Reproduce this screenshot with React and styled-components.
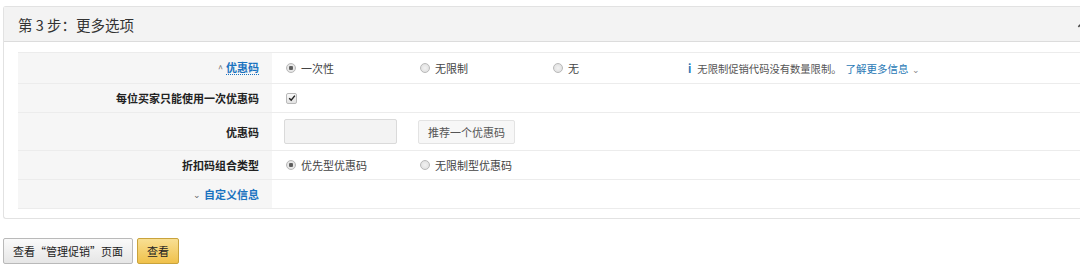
import styled, { createGlobalStyle } from "styled-components";

const GlobalStyle = createGlobalStyle`
    html, body{
        margin: 0;
        padding: 0;
        background: #fff;
        overflow: hidden;
    }
    *{
        box-sizing: border-box;
    }
    body{
        width: 1080px;
        height: 270px;
        font-family: "Noto Sans CJK SC", "Noto Sans", Arial, sans-serif;
        font-size: 11px;
        color: #333;
    }
`

const Page = styled.div`
    padding: 6px 0 0 3px;
    width: 1100px;
`

const Panel = styled.div`
    border: 1px solid #e2e2e2;
    border-right: none;
    border-radius: 3px 0 0 3px;
    background: #fff;
`

const PanelHead = styled.div`
    height: 35px;
    display: flex;
    align-items: center;
    justify-content: space-between;
    padding: 0 12px 0 14px;
    background: #f3f3f3;
    border-bottom: 1px solid #dcdcdc;
    font-size: 14.5px;
    color: #333;
    svg{
        width: 11px;
        height: 11px;
    }
`

const PanelBody = styled.div`
    padding: 10px 0 9px 14px;
`

const Table = styled.div`
    border-top: 1px solid #ececec;
    border-bottom: 1px solid #ececec;
`

const Row = styled.div`
    display: flex;
    height: ${p => p.h || 29}px;
    border-top: ${p => p.first ? "none" : "1px solid #ececec"};
`

const Label = styled.div`
    width: 254px;
    flex: none;
    background: #f6f6f6;
    display: flex;
    align-items: center;
    justify-content: flex-end;
    padding-right: 13px;
    font-weight: bold;
    color: ${p => p.link ? "#1a73c0" : "#222"};
    a{
        color: #1a73c0;
        text-decoration: none;
        border-bottom: ${p => p.dotted ? "1px dotted #1a73c0" : "none"};
        line-height: 13px;
    }
    span.arrow{
        font-weight: normal;
        font-size: 9px;
        margin-right: 3px;
        color: #666;
    }
`

const Value = styled.div`
    flex: 1;
    display: flex;
    align-items: center;
    padding-left: 14px;
`

const Option = styled.label`
    width: ${p => p.w || 134}px;
    display: flex;
    align-items: center;
    gap: 5px;
    color: #444;
`

const Radio = styled.span`
    width: 10px;
    height: 10px;
    border-radius: 50%;
    border: 1px solid #b9b9b9;
    background: radial-gradient(circle, ${p => p.checked ? "#555 0, #666 2px, #e9e9e9 2.5px" : "#f2f2f2 0"}, #dcdcdc 100%);
    flex: none;
`

const Check = styled.span`
    width: 11px;
    height: 11px;
    border: 1px solid #b9b9b9;
    border-radius: 2px;
    background: linear-gradient(#fafafa, #e2e2e2);
    display: flex;
    align-items: center;
    justify-content: center;
    svg{
        width: 8px;
        height: 8px;
    }
`

const Info = styled.div`
    display: flex;
    align-items: center;
    gap: 6px;
    color: #555;
    font-size: 10.3px;
    b{
        color: #2a7ab6;
        font-size: 11px;
    }
    a{
        color: #2a7ab6;
        text-decoration: none;
        font-size: 10.5px;
        margin-left: -2px;
    }
    small{
        color: #888;
        font-size: 9px;
        margin-left: 3px;
    }
`

const TextInput = styled.div`
    width: 113px;
    height: 25px;
    background: #f3f3f3;
    border: 1px solid #dadada;
    border-radius: 2px;
    margin-left: -2px;
`

const GhostButton = styled.div`
    margin-left: 21px;
    height: 24px;
    padding: 0 9px;
    display: flex;
    align-items: center;
    background: #f7f7f7;
    border: 1px solid #e3e3e3;
    border-radius: 2px;
    color: #555;
`

const Actions = styled.div`
    display: flex;
    gap: 4px;
    margin-top: 19px;
`

const Button = styled.div`
    height: 26px;
    padding: 0 9px;
    display: flex;
    align-items: center;
    border: 1px solid ${p => p.primary ? "#c9a33c" : "#b9b9b9"};
    border-radius: 2px;
    background: ${p => p.primary ? "linear-gradient(#f8df93, #f0c14b)" : "linear-gradient(#fafafa, #e6e6e6)"};
    color: #222;
`

const App = () => {
    return(
        <>
            <GlobalStyle/>
            <Page>
                <Panel>
                    <PanelHead>
                        <span>第 3 步：更多选项</span>
                        <svg viewBox="0 0 12 12"><path d="M1.5 8.5 L6 4 L10.5 8.5" stroke="#444" strokeWidth="1.8" fill="none"/></svg>
                    </PanelHead>
                    <PanelBody>
                        <Table>
                            <Row first h={30}>
                                <Label dotted><span className="arrow">^</span><a>优惠码</a></Label>
                                <Value>
                                    <Option><Radio checked/>一次性</Option>
                                    <Option w={133}><Radio/>无限制</Option>
                                    <Option w={135}><Radio/>无</Option>
                                    <Info>
                                        <b>i</b>
                                        <span>无限制促销代码没有数量限制。</span>
                                        <a>了解更多信息<small>⌄</small></a>
                                    </Info>
                                </Value>
                            </Row>
                            <Row>
                                <Label>每位买家只能使用一次优惠码</Label>
                                <Value>
                                    <Check>
                                        <svg viewBox="0 0 10 10"><path d="M1.5 5.2 L4 7.8 L8.6 2" stroke="#222" strokeWidth="1.8" fill="none"/></svg>
                                    </Check>
                                </Value>
                            </Row>
                            <Row h={38}>
                                <Label>优惠码</Label>
                                <Value>
                                    <TextInput/>
                                    <GhostButton>推荐一个优惠码</GhostButton>
                                </Value>
                            </Row>
                            <Row>
                                <Label>折扣码组合类型</Label>
                                <Value>
                                    <Option><Radio checked/>优先型优惠码</Option>
                                    <Option><Radio/>无限制型优惠码</Option>
                                </Value>
                            </Row>
                            <Row>
                                <Label link><span className="arrow">⌄</span><a>自定义信息</a></Label>
                                <Value/>
                            </Row>
                        </Table>
                    </PanelBody>
                </Panel>
                <Actions>
                    <Button>查看“管理促销”页面</Button>
                    <Button primary>查看</Button>
                </Actions>
            </Page>
        </>
    )
}

export default App;
